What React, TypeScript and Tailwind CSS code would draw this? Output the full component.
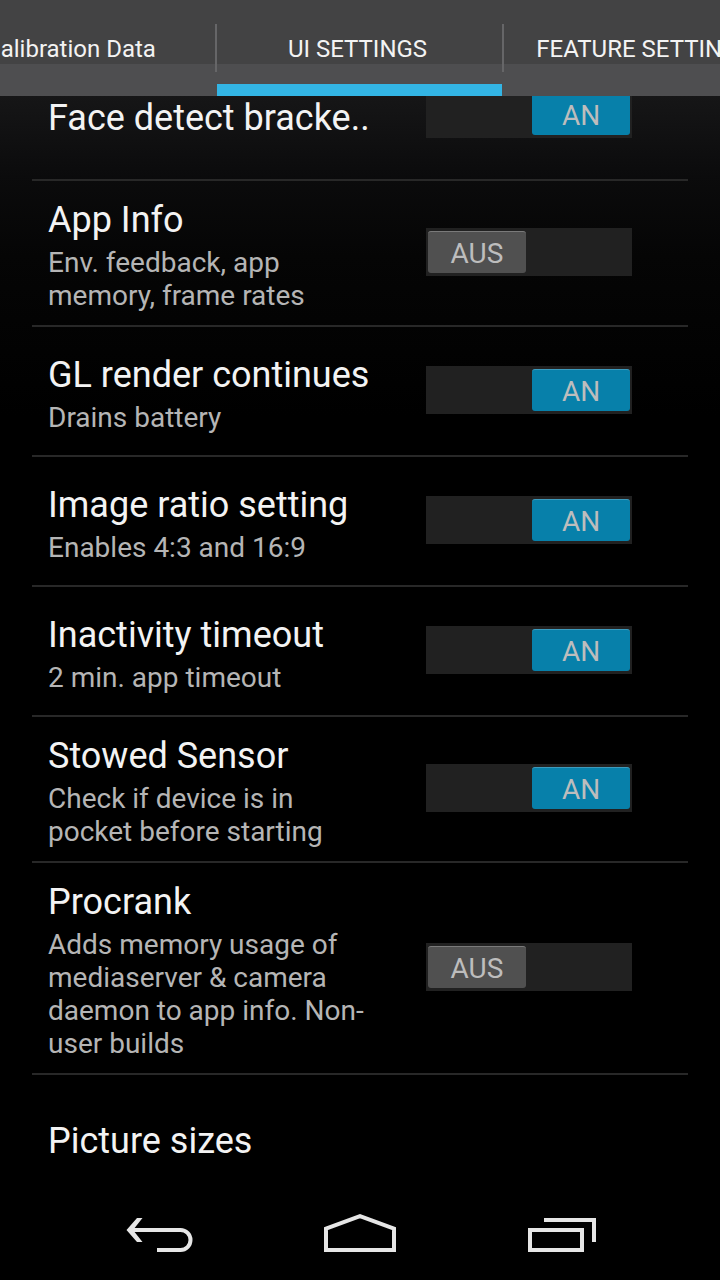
import React from 'react'

interface Setting {
  id: string
  title: string
  description?: string
  on: boolean
}

const TABS = ['Calibration Data', 'UI SETTINGS', 'FEATURE SETTINGS']

const SETTINGS: Setting[] = [
  { id: 'face', title: 'Face detect bracke..', on: true },
  { id: 'info', title: 'App Info', description: 'Env. feedback, app memory, frame rates', on: false },
  { id: 'gl', title: 'GL render continues', description: 'Drains battery', on: true },
  { id: 'ratio', title: 'Image ratio setting', description: 'Enables 4:3 and 16:9', on: true },
  { id: 'timeout', title: 'Inactivity timeout', description: '2 min. app timeout', on: true },
  { id: 'stowed', title: 'Stowed Sensor', description: 'Check if device is in pocket before starting', on: true },
  {
    id: 'procrank',
    title: 'Procrank',
    description: 'Adds memory usage of mediaserver & camera daemon to app info. Non-user builds',
    on: false,
  },
]

function TabStrip() {
  const [active, setActive] = React.useState(1)

  return (
    <header className="relative z-10 h-24 shrink-0 overflow-hidden bg-[linear-gradient(#434344_64px,#4e4e50_64px)]">
      {/* the strip is scrolled so that the middle tab is centred */}
      <div role="tablist" className="-ml-[70px] flex h-full items-center">
        {TABS.map((tab, i) => (
          <React.Fragment key={tab}>
            {i > 0 && <span className="h-12 w-[2px] shrink-0 bg-[#666668]" />}
            <button
              type="button"
              role="tab"
              aria-selected={i === active}
              onClick={() => setActive(i)}
              className={`h-full min-w-[285px] shrink-0 border-y-[12px] border-t-transparent pt-[2px] pr-9 pl-8 text-2xl whitespace-nowrap text-[#f3f3f3] ${
                i === active ? 'border-b-[#33b5e5]' : 'border-b-transparent'
              }`}
            >
              {tab}
            </button>
          </React.Fragment>
        ))}
      </div>
    </header>
  )
}

function Switch({ id, checked, onChange }: { id: string; checked: boolean; onChange: (v: boolean) => void }) {
  return (
    <label
      className={`relative mb-[2px] flex h-12 w-[206px] shrink-0 cursor-pointer bg-[#212121] px-[2px] py-[3px] ${
        checked ? 'justify-end' : 'justify-start'
      }`}
    >
      <input
        type="checkbox"
        role="switch"
        aria-labelledby={id}
        className="sr-only"
        checked={checked}
        onChange={(e) => onChange(e.target.checked)}
      />
      <span
        className={`flex w-[98px] items-center justify-center rounded-[3px] border-t pt-[2px] text-[28px] leading-8 text-[#bdbdbd] ${
          checked ? 'border-[#3d9bbd] bg-[#0780aa]' : 'border-[#7a7a7a] bg-[#505050]'
        }`}
      >
        {checked ? 'AN' : 'AUS'}
      </span>
    </label>
  )
}

function SettingRow({ setting }: { setting: Setting }) {
  const [on, setOn] = React.useState(setting.on)

  return (
    <li className="flex min-h-[130px] items-center gap-12 border-b-2 border-[#282828] pr-14 pl-4">
      <div className="min-w-0 flex-1 pt-[18px] pb-[13px]">
        <h2 id={setting.id} className="text-4xl leading-[42px] text-[#f3f3f3]">{setting.title}</h2>
        {setting.description && (
          <p className="mt-[5px] text-[28px] leading-[33px] text-[#b5b5b5]">{setting.description}</p>
        )}
      </div>
      <Switch id={setting.id} checked={on} onChange={setOn} />
    </li>
  )
}

function NavBar() {
  return (
    <nav className="relative z-10 grid h-24 shrink-0 grid-cols-3 bg-black px-[60px] text-[#e6e6e6]">
      <button type="button" aria-label="Back" className="flex items-center justify-center">
        <svg width="72" height="40" viewBox="0 0 72 40" fill="none" aria-hidden>
          <path d="M33 38H56.5a10 10 0 0 0 0-20H7" stroke="currentColor" strokeWidth="4" />
          <path d="M2.500 18L13 6h5.500L9 18l9.500 12H13z" fill="currentColor" />
        </svg>
      </button>
      <button type="button" aria-label="Home" className="flex items-center justify-center">
        <svg width="72" height="40" viewBox="0 0 72 40" fill="none" aria-hidden>
          <path d="M2 16.600L36 4.200L70 16.600V38H2z" stroke="currentColor" strokeWidth="4" />
        </svg>
      </button>
      <button type="button" aria-label="Recent apps" className="flex items-center justify-center">
        <svg width="72" height="40" viewBox="0 0 72 40" fill="none" stroke="currentColor" strokeWidth="4" aria-hidden>
          <path d="M6 18H58V38H6z" />
          <path d="M20 8H70V30" />
        </svg>
      </button>
    </nav>
  )
}

export default function App() {
  return (
    <div className="flex h-screen flex-col overflow-hidden bg-black font-[Roboto,sans-serif]">
      <TabStrip />
      <main className="min-h-0 flex-1 overflow-hidden bg-[linear-gradient(#161617,#0b0b0c_80px,#050505_160px,#000_320px)]">
        {/* list is scrolled partly under the tab strip */}
        <ul className="-mt-[45px] px-8">
          {SETTINGS.map((s) => (
            <SettingRow key={s.id} setting={s} />
          ))}
          <li>
            <button
              type="button"
              className="flex min-h-[130px] w-full items-center px-4 pt-[2px] text-left text-4xl leading-[42px] text-[#f3f3f3]"
            >
              Picture sizes
            </button>
          </li>
        </ul>
      </main>
      <NavBar />
    </div>
  )
}
